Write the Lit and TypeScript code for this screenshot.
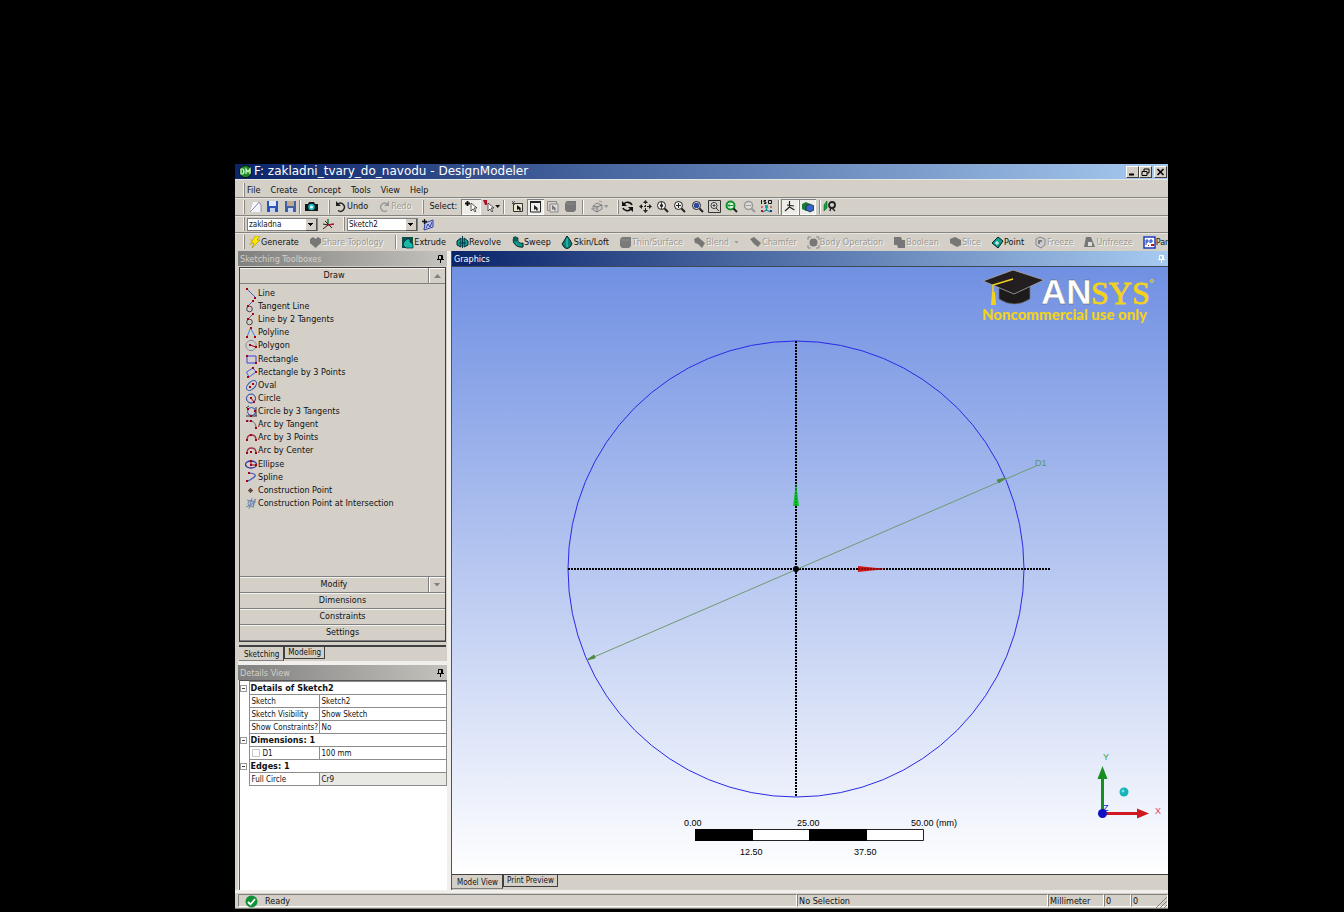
import { LitElement, html, svg, css } from "lit";
import { customElement } from "lit/decorators.js";
import { classMap } from "lit/directives/class-map.js";

const lens = (inner: unknown, c = "#222") => svg`<circle cx="5.5" cy="5.5" r="4" fill="#eee" stroke=${c}/>${inner}<path d="M8.500 8.500L12 12" stroke=${c} stroke-width="2"/>`;
const slab = (c: string) => svg`<path d="M1 3l2-2h9v9l-2 2H3l-2-2z" fill=${c}/><path d="M1 3l3 1h7" fill="none" stroke="#999" stroke-width=".6"/>`;
const dots = (...p: number[][]) => p.map(([x, y]) => svg`<rect x=${x - 1} y=${y - 1} width="2" height="2" fill="#a00018"/>`);

const ICONS: Record<string, unknown> = {
  app: svg`<circle cx="6.500" cy="6.500" r="6.500" fill="#0a1a0a"/><circle cx="6.500" cy="6.500" r="5.500" fill="#1d8a2a"/><path d="M2 4h2q2 2.500 0 5H2zM7 9V4l2 3 2-3v5" fill="none" stroke="#d8ffd0" stroke-width="1.200"/>`,
  doc: svg`<path d="M4 2h6l2 3v7H1l1-3z" fill="#f4f4fa"/><path d="M1 12l5-5 4-5M10 2l2 3v7" fill="none" stroke="#8890a8"/>`,
  save: svg`<path d="M1 1h11v11H1z" fill="#2a55b8"/><path d="M3 1h7v5H3z" fill="#dfe8ff"/><path d="M4 8h5v4H4z" fill="#c3d0ee"/>`,
  saveas: svg`<path d="M1 1h11v11H1z" fill="#4360a0"/><path d="M3 1h7v5H3z" fill="#c3a890"/><path d="M4 8h5v4H4z" fill="#c8d8f4"/>`,
  camera: svg`<path d="M0 4h3l1-2h5l1 2h3v7H0z" fill="#101818"/><circle cx="6.500" cy="7" r="3.300" fill="#1ab5c0"/><circle cx="6.500" cy="7" r="1.500" fill="#e8ffff"/>`,
  undo: svg`<path d="M4 4a4 4 0 1 1 0 6.500" fill="none" stroke="#222" stroke-width="1.400"/><path d="M2 1v5h5z" fill="#222"/>`,
  redo: svg`<path d="M9 4a4 4 0 1 0 0 6.500" fill="none" stroke="#999" stroke-width="1.400"/><path d="M11 1v5H6z" fill="#999"/>`,
  pick: svg`<path d="M0 3.500h5M2.500 1v5" stroke="#111" stroke-width="1.800"/><path d="M6 3v8l2-2 2 3 1-1-2-3h3z" fill="#fff" stroke="#333" stroke-width=".8"/>`,
  pick2: svg`<path d="M1 0h4v5H3z" fill="#b01028"/><path d="M6 3v8l2-2 2 3 1-1-2-3h3z" fill="#fff" stroke="#333" stroke-width=".8"/>`,
  filter1: svg`<path d="M2.500 3.500h9v8h-9z" fill="#e9e6cf" stroke="#333"/><path d="M1 1l3 4M4 1L1 4" stroke="#555"/><path d="M6 5v5l1.500-1 1.500 2 1-1-1-1.500h1.500z" fill="#111"/>`,
  filter2: svg`<path d="M1.500 2h10v10h-10z" fill="#eee" stroke="#222"/><path d="M1 2h11" stroke="#222" stroke-width="2"/><path d="M5 5v5l1.500-1L8 11l1-1-1-1.500h1.500z" fill="#222"/>`,
  filter3: svg`<path d="M1.500 1.500h9v3M1.500 1.500v9h2" fill="none" stroke="#8a8a86"/><path d="M4 4h8v8H4z" fill="#ddd" stroke="#888"/><path d="M6 5v5l1.500-1L9 11l1-1-1-1.500h1.500z" fill="#777"/>`,
  body: slab("#777"),
  box: svg`<path d="M2 6l4-3 5 2v4l-5 3-4-2z" fill="#c8c8c4" stroke="#888"/><path d="M2 6l4 1 5-2M6 7v5" fill="none" stroke="#777"/><path d="M0 9l5-1M8 1l3 1" stroke="#999"/>`,
  rotate: svg`<path d="M11 5A4.500 4 0 0 0 3 4M2 8a4.500 4 0 0 0 8 1" fill="none" stroke="#111" stroke-width="1.700"/><path d="M1 1v5h5zM12 12V7H7z" fill="#111"/>`,
  pan: svg`<path d="M6.500 0l2.500 3H4zM6.500 13L4 10h5zM0 6.500L3 4v5zM13 6.500L10 4v5z" fill="#222"/><path d="M6.500 2v9M2 6.500h9" stroke="#222" stroke-dasharray="2 1"/>`,
  zoom: lens(svg`<path d="M5.500 2v7" stroke="#444"/><circle cx="5.500" cy="5.500" r="1.600" fill="#222"/>`),
  zoomin: lens(svg`<path d="M5.500 3v5M3 5.500h5" stroke="#222"/>`),
  zoomfit: lens(svg`<circle cx="5.500" cy="5.500" r="2.800" fill="#2c4a9c"/>`),
  zoombox: svg`<path d="M.5.500h12v12H.5z" fill="none" stroke="#333"/><circle cx="6" cy="5.500" r="3" fill="#eee" stroke="#333"/><path d="M4.500 5.500h3M6 4v3M8 8l3 3" stroke="#333"/>`,
  zoomprev: lens(svg`<circle cx="5.500" cy="5.500" r="4" fill="#e8fff0" stroke="#12902a" stroke-width="2"/><path d="M2.500 5.500h6M5 3.500l-2 2 2 2" fill="none" stroke="#12902a"/>`),
  zoomnext: lens(svg`<circle cx="5.500" cy="5.500" r="4" fill="#ddd" stroke="#999" stroke-width="1.500"/><path d="M3 5.500h5" stroke="#999"/>`, "#999"),
  iso: svg`<path d="M1.500 0v4M6 .5H4v1.500h2v1.500H4M8.500.5h3v3h-3z" fill="none" stroke="#111"/><path d="M6.500 6v4l-4 2M6.500 10l4 2" fill="none" stroke="#109090" stroke-width="1.300"/><path d="M5 5h3v3H5z" fill="#15a8b0"/><path d="M1 10h2v2H1z" fill="#b01028"/><path d="M10 10h2v2h-2z" fill="#2030a0"/><path d="M1 7h2M10 7h2" stroke="#b01028"/>`,
  axes: svg`<path d="M6.500 1v6L2 11M6.500 7l5 3M4 5l7 1" fill="none" stroke="#222" stroke-width="1.200"/>`,
  cubes: svg`<path d="M1 4l4-2 4 2v5l-4 2-4-2z" fill="#1c7a34"/><path d="M5 6l4-2 4 2v4l-4 2-4-2z" fill="#3565c8" stroke="#123" stroke-width=".7"/>`,
  look: svg`<path d="M1 5l3-4v7l-3 3z" fill="#15a030" stroke="#063" stroke-width=".6"/><circle cx="9" cy="5" r="3" fill="none" stroke="#222" stroke-width="1.800"/><path d="M8 7l-1 4M9 8l3 3" fill="none" stroke="#222" stroke-width="1.400"/>`,
  plane: svg`<path d="M6 1v6" stroke="#157a28" stroke-width="1.400"/><path d="M6 7l-5 4M3 3l7 7M1 6l5 1" stroke="#222"/><path d="M6 7l6-1" stroke="#b01028" stroke-width="1.300"/>`,
  sketch: svg`<path d="M3 5l8-3v7l-9 3z" fill="#bfc6ec" stroke="#3440a0"/><path d="M4 10l2-4 2 3 2-5" fill="none" stroke="#3440a0"/><path d="M2.500 1v5M0 3.500h5" stroke="#111" stroke-width="1.300"/>`,
  bolt: svg`<path d="M7 0h5L9 4h3L4 12l2-5H3z" fill="#ffe800" stroke="#a08800" stroke-width=".6"/><path d="M2 4h2M1 8h3" stroke="#d8b800"/>`,
  heart: svg`<path d="M1 3l3-2 2.500 2L9 1l3 2v4l-5.500 5L1 7z" fill="#777"/>`,
  extrude: svg`<path d="M1 1h11v11H1z" fill="#0b4f48"/><path d="M6 3h3v3l3 2v4H5L2 9l1-3z" fill="#18b8a8" stroke="#023" stroke-width=".7"/>`,
  revolve: svg`<path d="M1 5l4-3v9l-4-2zM12 5L8 2v9l4-2z" fill="#0fa090" stroke="#023"/><path d="M6.500 0v12M3 7h7" stroke="#034"/>`,
  sweep: svg`<path d="M3 1c-3 6 3 11 9 10V7C9 8 6 6 7 2z" fill="#109888" stroke="#022"/><circle cx="4.500" cy="3" r="2.500" fill="#0b5f58"/>`,
  loft: svg`<path d="M6 0l3 4 2 4-2 3-3 2-3-2-2-3 2-3z" fill="#0c8078" stroke="#022"/><path d="M6 2v9" stroke="#3ad8c8"/>`,
  thin: slab("#7a7a7a"),
  blend: svg`<path d="M1 3l4-2 7 6-3 5-4-4-3-1z" fill="#777"/>`,
  chamfer: svg`<path d="M1 3l4-2 7 6-3 4-4-3z" fill="#777"/>`,
  bodyop: svg`<circle cx="6.500" cy="6.500" r="4" fill="#777"/><path d="M1 4V1h3M9 1h3v3M12 9v3H9M4 12H1V9" fill="none" stroke="#888"/>`,
  boolean: svg`<path d="M1 1h7l1 3h3v8H5l-1-3H1z" fill="#777"/>`,
  slice: svg`<path d="M1 3l5-2 6 3v5l-4 2-7-4z" fill="#777"/>`,
  point: svg`<path d="M1 7l6-6 5 4-5 7z" fill="#0ca090" stroke="#022"/><path d="M4 7h4M6 5v4" stroke="#fff"/>`,
  freeze: svg`<path d="M2 3l4-2 5 2v6l-4 3-5-3z" fill="#ccc" stroke="#888"/><path d="M5 8V5h3" fill="none" stroke="#666" stroke-width="1.500"/>`,
  unfreeze: svg`<path d="M3 1h5l4 10H1z" fill="#777"/><path d="M5 6h4v4H5z" fill="#ddd"/>`,
  param: svg`<path d="M1 1h11v11H1z" fill="#fff" stroke="#1c3cc0" stroke-width="1.500"/><path d="M3 9V4h2v2H3M7 7V4h2v2H7" fill="none" stroke="#1c3cc0"/><path d="M8 8h3v2H8zM5 9h1v1H5z" fill="#c01020"/>`,
  line: svg`<path d="M2 2l8 8" stroke="#5060c0"/>${dots([2, 2], [10, 11])}`,
  tangent: svg`<circle cx="4.500" cy="9" r="2.800" fill="none" stroke="#445"/><path d="M2 7l5-5" stroke="#5060c0"/>${dots([3, 6], [8, 1])}`,
  polyline: svg`<path d="M2 11L5.500 2l5 9" fill="none" stroke="#4080e0"/>${dots([2, 11], [6, 2], [10, 11])}`,
  polygon: svg`<path d="M4 1.500h4l3 3v4l-3 3H4l-3-3v-4z" fill="none" stroke="#8088a8"/><path d="M5 6l6 2" stroke="#a00018"/>${dots([5, 6], [11, 8])}`,
  rect: svg`<path d="M2 3h9v7H2z" fill="none" stroke="#4040e0"/>${dots([2, 3], [11, 10])}`,
  rect3: svg`<path d="M1.500 6L8 2l3 4-7 5z" fill="none" stroke="#4060e0"/>${dots([8, 2], [11, 6], [3, 11])}`,
  oval: svg`<ellipse cx="6.500" cy="6.500" rx="6" ry="3.500" transform="rotate(-45 6.500 6.500)" fill="none" stroke="#3050b0"/>${dots([5, 8], [8, 5])}`,
  circle: svg`<circle cx="6" cy="6.500" r="4.500" fill="none" stroke="#2038a0"/>${dots([6, 6], [9, 10])}<path d="M6 6l3 4" stroke="#a00018"/>`,
  circle3: svg`<circle cx="6.500" cy="6.500" r="4" fill="none" stroke="#3050c0"/><path d="M1 3l3-2M1 11h11M11 2v9" stroke="#333"/>${dots([3, 4], [10, 6], [6, 11])}`,
  arct: svg`<path d="M1 3h5q5 1 5 7" fill="none" stroke="#667"/>${dots([2, 3], [6, 3], [11, 10])}`,
  arc3: svg`<path d="M2 9q0-5 4.500-5T11 9" fill="none" stroke="#a03050" stroke-width="1.300"/>${dots([2, 9], [6, 4], [11, 9])}`,
  arcc: svg`<path d="M2 9q0-5 4.500-5T11 9" fill="none" stroke="#a03050" stroke-width="1.300"/>${dots([2, 9], [6, 8], [11, 9])}`,
  ellipse: svg`<ellipse cx="6" cy="6.500" rx="5.500" ry="3.500" fill="none" stroke="#3030a0" stroke-width="1.300"/><path d="M6 3v4h5" fill="none" stroke="#a00018"/>${dots([6, 3], [6, 7], [11, 7])}`,
  spline: svg`<path d="M4 2q10 1 4 5T2 10" fill="none" stroke="#4050c0" stroke-width="1.200"/>${dots([4, 2], [2, 10])}`,
  cpoint: svg`<circle cx="5.500" cy="6.500" r="2" fill="#a04038"/><path d="M5.500 4v5M3 6.500h5" stroke="#604848"/>`,
  cpointi: svg`<circle cx="6" cy="6.500" r="3" fill="#b8c4d4" stroke="#7088a8"/><path d="M1 10q6-1 10-8M2 3l9 2M4 12L7 1M8 11l2-9" fill="none" stroke="#7088a8"/>`,
  check: svg`<circle cx="6.500" cy="6.500" r="6" fill="#119038"/><path d="M3 7l2.500 2.500L10 4" fill="none" stroke="#fff" stroke-width="1.800"/>`,
  pin: svg`<path d="M4.500 3.500h4v4h-4z" fill="none" stroke="currentColor"/><path d="M7.500 3v5M3 7.500h7M6.500 8v3" stroke="currentColor"/>`,
};

const icon = (name: string) => html`<svg class="icon" viewBox="0 0 13 13" aria-hidden="true">${ICONS[name]}</svg>`;

const DRAW_TOOLS = [
  ["line", "Line"], ["tangent", "Tangent Line"], ["tangent", "Line by 2 Tangents"], ["polyline", "Polyline"],
  ["polygon", "Polygon"], ["rect", "Rectangle"], ["rect3", "Rectangle by 3 Points"], ["oval", "Oval"],
  ["circle", "Circle"], ["circle3", "Circle by 3 Tangents"], ["arct", "Arc by Tangent"], ["arc3", "Arc by 3 Points"],
  ["arcc", "Arc by Center"], ["ellipse", "Ellipse"], ["spline", "Spline"], ["cpoint", "Construction Point"],
  ["cpointi", "Construction Point at Intersection"],
];

const FEATURES: [string, string, boolean][] = [
  ["extrude", "Extrude", true], ["revolve", "Revolve", true], ["sweep", "Sweep", true], ["loft", "Skin/Loft", true],
  ["thin", "Thin/Surface", false], ["blend", "Blend", false], ["chamfer", "Chamfer", false],
  ["bodyop", "Body Operation", false], ["boolean", "Boolean", false], ["slice", "Slice", false],
  ["point", "Point", true], ["freeze", "Freeze", false], ["unfreeze", "Unfreeze", false], ["param", "Par", true],
];

@customElement("app-root")
export class AppRoot extends LitElement {
  static styles = css`
    :host {
      display: flex;
      box-sizing: border-box;
      min-height: 100vh;
      padding: 164px 176px 3px 235px;
      background: #000;
      color: #111;
      font: 9px/13px "DejaVu Sans Condensed", "DejaVu Sans", sans-serif;
    }
    * { box-sizing: border-box; }
    button, select, input { font: inherit; color: inherit; margin: 0; border-radius: 0; }
    button { display: flex; align-items: center; padding: 0; border: 0; background: none; white-space: nowrap; }
    .icon { width: 13px; height: 13px; flex: none; display: block; }
    .window {
      flex: 1; min-width: 0; display: flex; flex-direction: column;
      background: #d4d0c8; overflow: hidden;
    }
    .title {
      display: flex; align-items: center; height: 15px; padding: 0 1px 0 4px;
      background: linear-gradient(90deg, #0a246a, #a6caf0); color: #fff;
    }
    .title h1 { flex: 1; margin: 0 0 0 2px; font: 12px/17px "DejaVu Sans", sans-serif; white-space: nowrap; }
    .title button {
      justify-content: center; width: 13px; height: 12px; background: #d4d0c8; color: #000;
      border: 1px solid; border-color: #fff #404040 #404040 #fff;
    }
    .title .close { margin-left: 2px; }
    .title button svg { width: 9px; height: 8px; }
    .row {
      display: flex; align-items: center; height: 17px; padding-left: 8px; overflow: hidden;
      border-bottom: 1px solid #86847e; box-shadow: inset 0 1px #e8e6e0;
    }
    .menu { height: 19px; padding-top: 4px; }
    .tools { height: 18px; }
    .features { height: 18px; border-bottom: 0; }
    .grip { flex: none; width: 2px; height: 14px; border-right: 1px solid #8a8780; background: #f4f2ec; }
    .sep { flex: none; width: 2px; height: 14px; border-left: 1px solid #8a8780; background: #fff; }
    .menu nav { display: flex; gap: 10px; margin-left: 2px; }
    .group { display: flex; align-items: center; }
    .group button { justify-content: center; height: 16px; flex: 1; }
    .pressed { background: #efede8; box-shadow: inset 1px 1px #808080, inset -1px -1px #fff; }
    .files { width: 52px; margin-left: 2px; }
    .shot { width: 17px; margin: 0 8px 0 2px; }
    .history { gap: 10px; margin: 0 11px 0 4px; }
    .picks { width: 40px; margin: 0 2px 0 4px; }
    .select-label { margin-left: 5px; }
    .filters { width: 70px; margin: 0 3px 0 4px; }
    .cube { width: 27px; margin: 0 4px 0 2px; }
    .views { width: 156px; margin: 0 3px 0 0; }
    .modes { width: 35px; margin: 0 3px 0 1px; }
    .look { width: 17px; }
    .caret { width: 5px; height: 3px; flex: none; background: currentColor; clip-path: polygon(0 0, 100% 0, 50% 100%); }
    .off { color: #9c9a94; text-shadow: 1px 1px #f6f5f2; }
    .combo { display: flex; width: 71px; height: 13px; background: #fff; border: 1px solid #808080; position: relative; margin-left: 2px; }
    .combo select {
      appearance: none; width: 100%; border: 0; background: none; padding: 0 11px 0 1px; outline: 0;
      font-size: 8px; line-height: 11px;
    }
    .combo::after {
      content: ""; position: absolute; right: 0; top: 0; width: 10px; height: 11px; pointer-events: none;
      background: linear-gradient(#000, #000) 2px 4px / 5px 1px no-repeat,
        linear-gradient(#000, #000) 3px 5px / 3px 1px no-repeat,
        linear-gradient(#000, #000) 4px 6px / 1px 1px no-repeat, #d4d0c8;
      border-right: 1px solid #555; border-bottom: 1px solid #555;
    }
    .after-combo { margin: 0 8px 0 4px; }
    .features .list { display: flex; gap: 10px; min-width: 0; }
    .features .list.first { margin: 0 12px 0 3px; }
    .features .list.main { margin-left: 5px; }
    .features .list.main .icon { margin-left: -1px; }
    .features .list.main { gap: 11px; }
    .features .caret { margin-left: 5px; }
    .body { flex: 1; display: flex; min-height: 0; padding-left: 3px; background: linear-gradient(90deg, #d4d0c8 3px, #f0efec 3px); }
    .side { flex: none; width: 209px; display: flex; flex-direction: column; }
    .view { flex: 1; min-width: 0; display: flex; flex-direction: column; margin-left: 4px; border-left: 1px solid #50545c; background: #d4d0c8; }
    .bar { display: flex; align-items: center; justify-content: space-between; height: 15px; flex: none; }
    .bar h2 { margin: 0; font: inherit; padding: 1px 0 0 2px; }
    .bar.idle { background: linear-gradient(90deg, #808080, #c4c2bc); color: #d4d0c8; }
    .bar.idle .icon { color: #000; }
    .bar.live { background: linear-gradient(90deg, #0a246a, #a6caf0); color: #fff; }
    .toolbox { flex: none; height: 395px; display: flex; flex-direction: column; background: #d4d0c8; padding: 1px 1px 0; }
    .stack { flex: 1; display: flex; flex-direction: column; border: 1px solid #404040; }
    .head { display: flex; height: 16px; flex: none; border-bottom: 1px solid #808080; box-shadow: inset 0 1px #f4f2ee; }
    .head.low { border-top: 1px solid #808080; height: 17px; }
    .head .name { flex: 1; justify-content: center; }
    .head .arrow { width: 17px; justify-content: center; color: #808080; border-left: 1px solid #808080; box-shadow: inset 1px 1px #fff; }
    .up { transform: rotate(180deg); }
    .head .caret { width: 7px; height: 4px; }
    .drawlist { list-style: none; margin: 3px 0 auto; padding: 0 0 0 5px; height: 223px; display: grid; grid-auto-rows: 1fr; }
    .drawlist button { height: 13px; }
    .tabs { display: flex; align-items: flex-start; height: 16px; border-top: 1px solid #404040; }
    .toolbox .tabs { margin-top: 3px; flex: none; height: 16px; border-top-width: 2px; }
    .tabs button { padding: 0 3px; font-size: 8px; height: 12px; line-height: 12px; border: 1px solid #404040; border-top: 0; }
    .tabs .current { height: 14px; padding: 2px 4px 0 5px; border-left: 0; border-bottom-color: #808080; background: #d4d0c8; }
    .details { flex: 1; min-height: 0; margin-top: 4px; display: flex; flex-direction: column; }
    .sheet { flex: 1; background: #fff; border: 1px solid #555; border-width: 1px 0 0 1px; margin-left: 1px; }
    table { border-collapse: collapse; width: 100%; height: 105px; font-size: 8px; line-height: 11px; table-layout: fixed; }
    th, td { padding: 0 2px; height: 13px; border: 1px solid #8c8c8c; text-align: left; font-weight: 400; white-space: nowrap; }
    th.group-name { font-weight: 700; font-size: 9px; padding-left: 1px; }
    tr:first-child > * { border-top: 0; }
    td.fold { width: 9px; padding: 0; border: 0; }
    .fold button { width: 7px; height: 7px; border: 1px solid #999; color: #333; }
    .fold button::after { content: ""; flex: 1; height: 1px; margin: 0 1px; background: #444; }
    .prop { width: 70px; }
    .ro { background: #e8e8e4; }
    .tick { display: flex; align-items: center; gap: 3px; }
    .tick input { appearance: none; width: 8px; height: 8px; border: 1px solid #c8c8c8; background: #fff; }
    .canvas { flex: 1; position: relative; min-height: 0; border-top: 1px solid #404858; background: linear-gradient(#7090e2, #ffffff); overflow: hidden; }
    .scene { position: absolute; inset: 0; width: 100%; height: 100%; }
    .scene text, .ruler text, .triad text { font: 9px "Liberation Sans", sans-serif; }
    .ruler { position: absolute; left: 34%; margin-left: -12px; bottom: 13px; width: 280px; height: 44px; }
    .triad { position: absolute; right: 1px; bottom: 49px; width: 80px; height: 76px; }
    .logo { position: absolute; right: 8px; top: 0; width: 180px; height: 60px; }
    .status { display: flex; align-items: stretch; height: 19px; flex: none; padding: 4px 0 1px 3px; background: linear-gradient(#f0efec 3px, #d4d0c8 3px); border-bottom: 1px solid #807e78; }
    .status div { display: flex; align-items: center; padding: 1px 0 0 1px; border: 1px solid; border-color: #808080 #fff #fff #808080; }
    .status .ready { flex: 558; gap: 7px; padding-left: 6px; }
    .status .sel { flex: 251; }
    .status .unit { width: 56px; }
    .status .num { width: 27px; }
    .status .last { width: 37px; justify-content: space-between; }
  `;

  private tool(name: string, label: string, pressed = false, caret = false) {
    return html`<button class=${classMap({ pressed })} title=${label} aria-label=${label}>${icon(name)}${caret ? html`<span class="caret"></span>` : ""}</button>`;
  }

  private feature([name, label, on]: [string, string, boolean]) {
    return html`<button class=${classMap({ off: !on })}>${icon(name)}${label}${name === "blend" ? html`<span class="caret"></span>` : ""}</button>`;
  }

  private header(label: string) {
    return html`<tr><td class="fold"><button aria-label="Collapse ${label}"></button></td><th class="group-name" colspan="2">${label}</th></tr>`;
  }

  private prop(label: unknown, value: string, ro = false) {
    return html`<tr><td class="fold"></td><th class="prop" scope="row">${label}</th><td class=${classMap({ ro })}>${value}</td></tr>`;
  }

  render() {
    return html`
      <main class="window">
        <header class="title">
          ${icon("app")}
          <h1>F: zakladni_tvary_do_navodu - DesignModeler</h1>
          <button aria-label="Minimize"><svg viewBox="0 0 9 8"><path d="M1 6.500h5" stroke="#000" stroke-width="2"/></svg></button>
          <button aria-label="Restore"><svg viewBox="0 0 9 8"><path d="M3 3V1h5v4H6M1 3.500h5v4H1z" fill="none" stroke="#000"/></svg></button>
          <button class="close" aria-label="Close"><svg viewBox="0 0 9 8"><path d="M1.500 1l6 6M7.500 1l-6 6" stroke="#000" stroke-width="1.600"/></svg></button>
        </header>
        <div class="row menu">
          <span class="grip"></span>
          <nav>${["File", "Create", "Concept", "Tools", "View", "Help"].map((m) => html`<button>${m}</button>`)}</nav>
        </div>
        <div class="row tools">
          <span class="grip"></span>
          <div class="group files">${this.tool("doc", "New")}${this.tool("save", "Save")}${this.tool("saveas", "Save As")}</div>
          <span class="sep"></span>
          <div class="group shot">${this.tool("camera", "Image Capture")}</div>
          <span class="grip"></span>
          <div class="group history">
            <button>${icon("undo")}Undo</button>
            <button class="off">${icon("redo")}Redo</button>
          </div>
          <span class="grip"></span>
          <span class="select-label">Select:</span>
          <div class="group picks">${this.tool("pick", "New Selection", true)}${this.tool("pick2", "Select Mode", false, true)}</div>
          <span class="sep"></span>
          <div class="group filters">
            ${this.tool("filter1", "Points")}${this.tool("filter2", "Edges", true)}${this.tool("filter3", "Faces")}${this.tool("body", "Bodies")}
          </div>
          <span class="sep"></span>
          <div class="group cube off">${this.tool("box", "Extend Selection", false, true)}</div>
          <span class="grip"></span>
          <div class="group views">
            ${[["rotate", "Rotate"], ["pan", "Pan"], ["zoom", "Zoom"], ["zoomin", "Box Zoom"], ["zoomfit", "Zoom to Fit"], ["zoombox", "Magnifier"], ["zoomprev", "Previous View"], ["zoomnext", "Next View"], ["iso", "ISO View"]].map(([i, l]) => this.tool(i, l))}
          </div>
          <span class="sep"></span>
          <div class="group modes">${this.tool("axes", "Display Plane", true)}${this.tool("cubes", "Display Model", true)}</div>
          <span class="sep"></span>
          <div class="group look">${this.tool("look", "Look At")}</div>
        </div>
        <div class="row">
          <span class="grip"></span>
          <span class="combo"><select aria-label="Plane"><option>zakladna</option></select></span>
          <button class="after-combo" aria-label="New Plane">${icon("plane")}</button>
          <span class="grip"></span>
          <span class="combo"><select aria-label="Sketch"><option>Sketch2</option></select></span>
          <button class="after-combo" aria-label="New Sketch">${icon("sketch")}</button>
        </div>
        <div class="row features">
          <span class="grip"></span>
          <div class="list first">${this.feature(["bolt", "Generate", true])}${this.feature(["heart", "Share Topology", false])}</div>
          <span class="sep"></span>
          <div class="list main">${FEATURES.map((f) => this.feature(f))}</div>
        </div>
        <div class="body">
          <aside class="side">
            <div class="bar idle"><h2>Sketching Toolboxes</h2>${icon("pin")}</div>
            <section class="toolbox">
              <div class="stack">
                <div class="head"><button class="name">Draw</button><button class="arrow" aria-label="Scroll up"><span class="caret up"></span></button></div>
                <ul class="drawlist">${DRAW_TOOLS.map(([i, l]) => html`<li><button>${icon(i)}${l}</button></li>`)}</ul>
                <div class="head low"><button class="name">Modify</button><button class="arrow" aria-label="Scroll down"><span class="caret"></span></button></div>
                <div class="head"><button class="name">Dimensions</button></div>
                <div class="head"><button class="name">Constraints</button></div>
                <div class="head"><button class="name">Settings</button></div>
              </div>
              <div class="tabs"><button class="current">Sketching</button><button>Modeling</button></div>
            </section>
            <section class="details">
              <div class="bar idle"><h2>Details View</h2>${icon("pin")}</div>
              <div class="sheet">
                <table>
                  <colgroup><col style="width:9px"><col style="width:70px"><col></colgroup>
                  ${this.header("Details of Sketch2")}
                  ${this.prop("Sketch", "Sketch2")}
                  ${this.prop("Sketch Visibility", "Show Sketch")}
                  ${this.prop("Show Constraints?", "No")}
                  ${this.header("Dimensions: 1")}
                  ${this.prop(html`<label class="tick"><input type="checkbox">D1</label>`, "100 mm")}
                  ${this.header("Edges: 1")}
                  ${this.prop("Full Circle", "Cr9", true)}
                </table>
              </div>
            </section>
          </aside>
          <section class="view">
            <div class="bar live"><h2>Graphics</h2>${icon("pin")}</div>
            <div class="canvas">
              <svg class="scene" viewBox="0 0 716 607">
                <circle cx="344" cy="302" r="228" fill="none" stroke="#2a2ae8"/>
                <path d="M344 74v456M116 302h483" stroke="#000" stroke-width="2" stroke-dasharray="2 1"/>
                <path d="M135 393L584 199" stroke="#6f9a70"/>
                <path d="M135 393l7-5 1 3zM553 211l-8 2 2 3z" fill="#4f8a40" stroke="#4f8a40"/>
                <path d="M344 216l3 23h-6z" fill="#10c828"/><path d="M344 222v17" stroke="#063" stroke-dasharray="2 1"/>
                <path d="M434 302l-28 3v-6z" fill="#d01818"/><path d="M406 302h24" stroke="#500" stroke-dasharray="2 1"/>
                <circle cx="344" cy="302" r="3" fill="#000"/>
                <text x="583" y="199" fill="#5a9468">D1</text>
              </svg>
              <svg class="logo" viewBox="0 0 180 60">
                <path d="M19 16v16q15 10 31 0V16z" fill="#1c1a1a" stroke="#777" stroke-width=".7"/>
                <path d="M3 14L33 3l31 10-30 14z" fill="#231f20" stroke="#aaa" stroke-width=".8"/>
                <path d="M33 12l-20 6v9" fill="none" stroke="#f2d21c" stroke-width="1.600"/>
                <path d="M12 25h3l1 13h-5z" fill="#f2d21c"/>
                <text x="61" y="37" font-family="Liberation Sans, sans-serif" font-weight="700" font-size="35" fill="#fff" stroke="#555" stroke-width=".3">AN</text>
                <text x="111" y="37" font-family="Liberation Serif, serif" font-size="32" fill="#f2d21c" stroke="#f2d21c" stroke-width=".8">SYS</text>
                <circle cx="172" cy="14" r="1.500" fill="none" stroke="#f2d21c"/>
                <text x="2" y="53" font-family="Lato, sans-serif" font-weight="900" font-size="15" fill="#f2d21c">Noncommercial use only</text>
              </svg>
              <svg class="ruler" viewBox="0 0 280 44">
                <path d="M12.500 12.500h228v11h-228z" fill="#fff" stroke="#222"/>
                <path d="M12 12h58v12H12zM126 12h58v12h-58z" fill="#000"/>
                <text x="1" y="9">0.00</text><text x="114" y="9">25.00</text><text x="228" y="9">50.00 (mm)</text>
                <text x="57" y="38">12.50</text><text x="171" y="38">37.50</text>
              </svg>
              <svg class="triad" viewBox="0 0 80 76">
                <path d="M15.500 64V28" stroke="#159020" stroke-width="3"/><path d="M15.500 17l5 13h-10z" fill="#159020"/>
                <path d="M16 64.500h36" stroke="#d01820" stroke-width="3"/><path d="M62 64.500l-12-5v10z" fill="#d01820"/>
                <text x="16" y="62" fill="#2020e0">Z</text>
                <circle cx="15.500" cy="64.500" r="4.500" fill="#1010c0"/><circle cx="37" cy="43" r="4.500" fill="#14b4b8"/><circle cx="36" cy="42" r="1.500" fill="#7ae4e4"/>
                <text x="16" y="11" fill="#3c9c50">Y</text><text x="68" y="65" fill="#e04050">X</text>
              </svg>
            </div>
            <div class="tabs"><button class="current">Model View</button><button>Print Preview</button></div>
          </section>
        </div>
        <footer class="status">
          <div class="ready">${icon("check")}Ready</div>
          <div class="sel">No Selection</div>
          <div class="unit">Millimeter</div>
          <div class="num">0</div>
          <div class="last">0<svg class="icon" viewBox="0 0 13 13"><path d="M2 13L13 2M6 13l7-7M10 13l3-3" stroke="#808080"/></svg></div>
        </footer>
      </main>`;
  }
}
